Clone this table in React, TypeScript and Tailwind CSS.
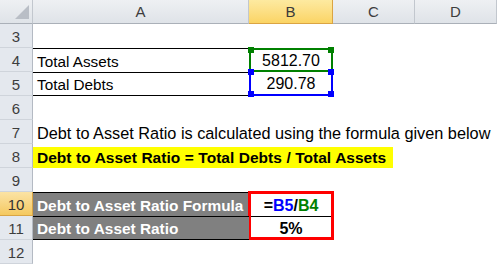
import React from "react";

const font = { fontFamily: '"Liberation Sans", Arial, sans-serif' };

function RowHead({ n, active }: { n: number; active?: boolean }) {
  return (
    <div
      className={
        "col-start-1 flex items-center justify-center border-r border-b pt-[3px] text-[15px] " +
        (active
          ? "bg-gradient-to-b from-[#fbe3a4] to-[#f5c95f] border-[#d9a545] text-[#333]"
          : "bg-[#e4e8ee] border-r-[#b4bac3] border-b-[#cfd4db] text-[#3d3d3d]")
      }
    >
      {n}
    </div>
  );
}

function ColHead({ label, active }: { label: string; active?: boolean }) {
  return (
    <div
      className={
        "flex items-center justify-center border-b border-r pt-[1px] text-[15px] " +
        (active
          ? "bg-gradient-to-b from-[#fdeaa0] to-[#fbd464] border-[#dba443] text-[#3a3a3a]"
          : "bg-gradient-to-b from-[#eef0f3] to-[#dfe3e8] border-r-[#c2c7ce] border-b-[#aab0b8] text-[#3d3d3d]")
      }
    >
      {label}
    </div>
  );
}

function Handle({ className }: { className: string }) {
  return <span className={"absolute h-[6px] w-[6px] " + className} />;
}

export default function App() {
  return (
    <div className="h-[265px] w-[497px] overflow-hidden bg-white text-black" style={font}>
      <div className="grid grid-cols-[33px_216px_84px_82px_82px] auto-rows-[24px]">
        {/* header */}
        <div className="relative border-r border-b border-r-[#c2c7ce] border-b-[#aab0b8] bg-gradient-to-b from-[#eef0f3] to-[#dfe3e8]">
          <svg className="absolute left-[15px] top-[5px]" width="14" height="14" viewBox="0 0 14 14">
            <polygon points="14,0 14,14 0,14" fill="#b9bec6" />
          </svg>
        </div>
        <ColHead label="A" />
        <ColHead label="B" active />
        <ColHead label="C" />
        <ColHead label="D" />

        {/* row 3 */}
        <RowHead n={3} />
        <div className="col-span-4" />

        {/* row 4 */}
        <RowHead n={4} />
        <div className="flex items-center border-t border-black pl-1 pt-[3px] text-[15.3px]">Total Assets</div>
        <div className="relative flex items-center justify-center border-2 border-[#008000] pt-[2px] text-[16px]">
          5812.70
          <Handle className="-left-[3px] -top-[3px] bg-[#008000]" />
          <Handle className="-right-[3px] -top-[3px] bg-[#008000]" />
        </div>
        <div className="col-span-2" />

        {/* row 5 */}
        <RowHead n={5} />
        <div className="flex items-center border-t border-b border-black pl-1 pt-[2px] text-[15.3px]">Total Debts</div>
        <div className="relative flex items-center justify-center border-2 border-t-0 border-[#0000ff] pt-[2px] text-[16px]">
          290.78
          <Handle className="-left-[3px] -top-[3px] bg-[#0000ff]" />
          <Handle className="-right-[3px] -top-[3px] bg-[#0000ff]" />
          <Handle className="-left-[3px] -bottom-[3px] bg-[#0000ff]" />
          <Handle className="-right-[3px] -bottom-[3px] bg-[#0000ff]" />
        </div>
        <div className="col-span-2" />

        {/* row 6 */}
        <RowHead n={6} />
        <div className="col-span-4" />

        {/* row 7 */}
        <RowHead n={7} />
        <div className="col-span-4 flex items-center whitespace-nowrap pl-1 pt-[3px] text-[16.3px]">
          Debt to Asset Ratio is calculated using the formula given below
        </div>

        {/* row 8 */}
        <RowHead n={8} />
        <div className="col-span-4 flex items-end">
          <div className="flex h-[21px] w-[360px] items-center bg-[#ffff00] pl-1 pt-[1px] text-[15.5px] font-bold">
            <span className="block w-[349px] whitespace-normal text-justify [text-align-last:justify]">
              Debt to Asset Ratio = Total Debts / Total Assets
            </span>
          </div>
        </div>

        {/* row 9 */}
        <RowHead n={9} />
        <div className="col-span-4" />

        {/* row 10 */}
        <RowHead n={10} active />
        <div className="flex items-center whitespace-nowrap border-t border-black bg-[#808080] pl-1 pt-[3px] text-[15.4px] font-bold text-white">
          Debt to Asset Ratio Formula
        </div>
        <div className="row-span-2 -mx-px -mt-px flex flex-col border-[3px] border-[#ff0000] bg-white text-[16px] font-bold">
          <div className="flex h-[23px] items-center justify-center border-b border-black pt-[2px]">
            <span>=</span>
            <span className="text-[#0000ff]">B5</span>
            <span>/</span>
            <span className="text-[#008000]">B4</span>
          </div>
          <div className="flex flex-1 items-center justify-center">5%</div>
        </div>
        <div className="col-span-2" />

        {/* row 11 */}
        <RowHead n={11} />
        <div className="flex items-center whitespace-nowrap border-t border-b border-black bg-[#808080] pl-1 pt-[2px] text-[15.4px] font-bold text-white">
          Debt to Asset Ratio
        </div>
        <div className="col-span-2" />

        {/* row 12 */}
        <RowHead n={12} />
        <div className="col-span-4" />
      </div>
    </div>
  );
}
